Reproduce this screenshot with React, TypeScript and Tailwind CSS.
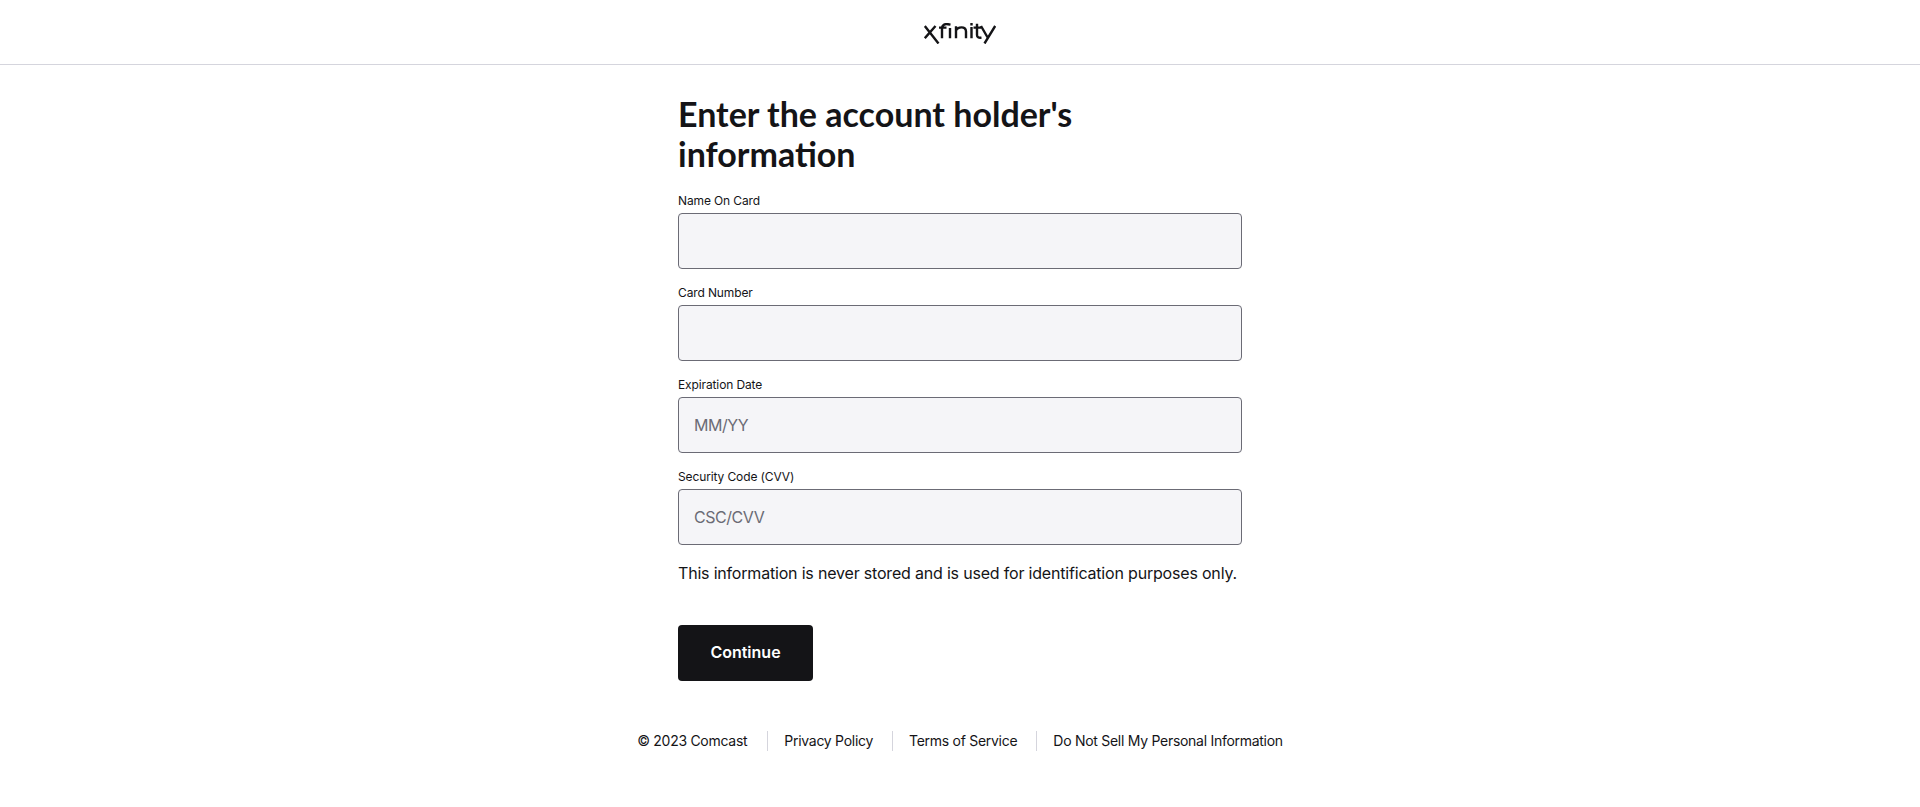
const sans = "font-['Inter',sans-serif]";

function Logo() {
  return (
    <svg width="72" height="21" viewBox="0 0 72 21" fill="none" stroke="#141417" strokeWidth="2.4" aria-label="xfinity">
      <path d="M0.8 3 L14.5 20.5 M11.5 3 L0.8 15.2" />
      <path d="M18 15.2V5.5C18 2.2 20.2 0.8 24 1.2L26.5 1.6M15 4.6H22.5M26 5V15.2" />
      <path d="M32 3.2V15.2M32 7.6C33.5 3.8 42 2.4 42 8.6V15.2" />
      <path d="M47.5 4V15.2M47.5 0V2.6" />
      <path d="M53 0.8V12C53 14.2 54.5 15 57.5 14.6M49.5 4.6H57" />
      <path d="M57 3L64.2 15.5M71.2 3L60.5 20.5" />
    </svg>
  );
}

function Field({ label, placeholder }: { label: string; placeholder?: string }) {
  return (
    <div className="mb-[16px]">
      <label className="mb-[4px] block h-[16px] text-[12px] leading-[16px] tracking-[-0.12px] text-[#141417]">{label}</label>
      <input
        placeholder={placeholder}
        className="block h-[56px] w-full rounded-[4px] border border-[#6b6b75] bg-[#f5f5f8] px-[15px] pb-[1px] text-[16px] tracking-[-0.45px] text-[#141417] outline-none placeholder:text-[#6b6b75]"
      />
    </div>
  );
}

export default function App() {
  return (
    <div className={sans + " min-h-[807px] bg-white text-[#141417]"}>
      <header className="flex h-[65px] items-center justify-center border-b border-[#d5d5dd] pt-[3px]">
        <Logo />
      </header>
      <main className="mx-auto w-[564px] pt-[29px]">
        <h1 className="mb-[19px] w-[440px] font-['Lato',sans-serif] text-[34px] leading-[40px] font-bold">Enter the account holder's information</h1>
        <Field label="Name On Card" />
        <Field label="Card Number" />
        <Field label="Expiration Date" placeholder="MM/YY" />
        <Field label="Security Code (CVV)" placeholder="CSC/CVV" />
        <p className="text-[16px] leading-[24px] tracking-[-0.19px]">This information is never stored and is used for identification purposes only.</p>
        <button className="mt-[40px] h-[56px] w-[135px] rounded-[4px] bg-[#141417] pb-[2px] text-[16px] font-semibold text-white">Continue</button>
      </main>
      <footer className="mt-[50px] flex justify-center text-[14px] leading-[20px] tracking-[-0.28px]">
        <span className="pr-[20px]">© 2023 Comcast</span>
        <a className="border-l border-[#d5d5dd] pr-[19px] pl-[16px]">Privacy Policy</a>
        <a className="border-l border-[#d5d5dd] pr-[19px] pl-[16px]">Terms of Service</a>
        <a className="border-l border-[#d5d5dd] pl-[16px]">Do Not Sell My Personal Information</a>
      </footer>
    </div>
  );
}
